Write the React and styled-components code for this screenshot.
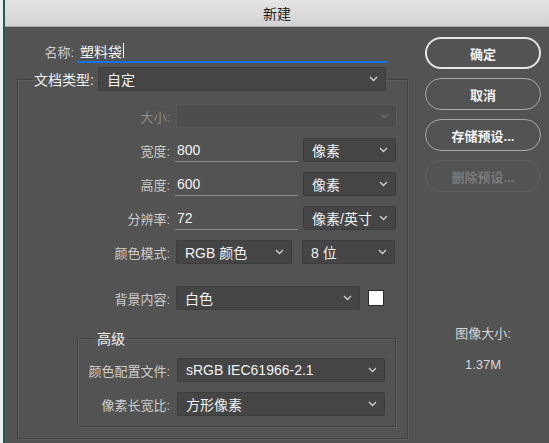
import React from 'react'
import styled, { createGlobalStyle } from 'styled-components'

const GlobalStyle = createGlobalStyle`
  html, body {
    margin: 0;
    padding: 0;
    background: #535353;
  }
  body {
    font-family: "Liberation Sans", "Noto Sans CJK SC", sans-serif;
    font-size: 13px;
  }
  * { box-sizing: border-box; }
`

const Screen = styled.div`
  width: 549px;
  height: 443px;
  display: flex;
  overflow: hidden;
`

const BehindWindow = styled.div`
  width: 5px;
  flex: none;
  background: #eeeeee;
  border-right: 2px solid #1f5c56;
`

const Dialog = styled.div`
  flex: 1;
  display: flex;
  flex-direction: column;
  background: #535353;
`

const TitleBar = styled.div`
  height: 27px;
  flex: none;
  display: flex;
  align-items: center;
  justify-content: center;
  background: linear-gradient(#e4e4e4, #d2d2d2);
  border-bottom: 1px solid #a9a9a9;
  color: #1c1c1c;
  font-size: 14px;
`

const Body = styled.div`
  flex: 1;
  display: grid;
  grid-template-columns: 415px 1fr;
`

const MainPane = styled.div`
  display: flex;
  flex-direction: column;
  padding-top: 13px;
`

const NameRow = styled.div`
  display: grid;
  grid-template-columns: 69px 311px;
  column-gap: 3px;
  align-items: center;
  height: 23px;
`

const Label = styled.span`
  text-align: right;
  white-space: nowrap;
  color: ${p => (p.$disabled ? '#8b8b8b' : '#cdcdcd')};
  font-size: 13px;
`

const NameInput = styled.div`
  height: 23px;
  display: flex;
  align-items: center;
  padding-left: 3px;
  border-bottom: 2px solid #1473e6;
  color: #f2f2f2;
  font-size: 14px;
`

const Caret = styled.span`
  width: 1px;
  height: 15px;
  margin-left: 1px;
  background: #f2f2f2;
`

const Group = styled.fieldset`
  margin: ${p => p.$margin};
  padding: ${p => p.$padding};
  width: ${p => p.$width}px;
  border: 1px solid #414141;
  box-shadow: 1px 1px 0 #5f5f5f, inset 1px 1px 0 #5f5f5f;
  display: flex;
  flex-direction: column;
  gap: ${p => p.$gap}px;
  min-width: 0;
`

const Legend = styled.legend`
  margin-left: ${p => p.$offset}px;
  padding: 0 2px;
  color: #f0f0f0;
  font-size: 14px;
`

const LegendRow = styled.div`
  display: flex;
  align-items: center;
  gap: 4px;
`

const Row = styled.div`
  display: grid;
  grid-template-columns: ${p => p.$label}px auto;
  column-gap: ${p => p.$gap}px;
  align-items: center;
  margin-top: ${p => p.$top || 0}px;
`

const Controls = styled.div`
  display: flex;
  align-items: center;
  gap: ${p => p.$gap || 5}px;
`

const SelectBox = styled.div`
  width: ${p => p.$w}px;
  height: 24px;
  display: flex;
  align-items: center;
  justify-content: space-between;
  padding: 0 7px 0 8px;
  background: ${p => (p.$disabled ? '#4d4d4d' : '#454545')};
  border: 1px solid ${p => (p.$disabled ? '#5a5a5a' : '#3d3d3d')};
  border-radius: 2px;
  color: #f2f2f2;
  font-size: 14px;
  white-space: nowrap;
`

const TextField = styled.div`
  width: ${p => p.$w}px;
  height: 24px;
  display: flex;
  align-items: center;
  padding-left: 2px;
  border-bottom: 1.5px solid #8a8a8a;
  color: #f2f2f2;
  font-size: 14px;
`

const Swatch = styled.div`
  width: 16px;
  height: 16px;
  margin-left: 3px;
  background: #ffffff;
  border: 1px solid #2a2a2a;
`

const SidePane = styled.div`
  display: flex;
  flex-direction: column;
  align-items: flex-start;
  padding: 10px 0 0 5px;
`

const Buttons = styled.div`
  display: flex;
  flex-direction: column;
  gap: 9px;
`

const PillButton = styled.button`
  width: 116px;
  height: 32px;
  border-radius: 16px;
  background: transparent;
  border: ${p => (p.$primary ? '2px solid #e6e6e6' : p.disabled ? '1.5px solid #626262' : '1.5px solid #a8a8a8')};
  color: ${p => (p.disabled ? '#7a7a7a' : '#f2f2f2')};
  font-family: inherit;
  font-size: 13px;
  font-weight: 700;
`

const SizeInfo = styled.div`
  width: 116px;
  margin-top: 131px;
  display: flex;
  flex-direction: column;
  align-items: center;
  gap: 15px;
  color: #d6d6d6;
  font-size: 13px;
`

const Chevron = ({ dim }) => (
  <svg width="9" height="6" viewBox="0 0 9 6">
    <polyline points="1,1 4.5,4.5 8,1" fill="none" stroke={dim ? '#6a6a6a' : '#cfcfcf'} strokeWidth="1.4" />
  </svg>
)

const Select = ({ w, value, disabled }) => (
  <SelectBox $w={w} $disabled={disabled}>
    <span>{value}</span>
    <Chevron dim={disabled} />
  </SelectBox>
)

const App = () => (
  <Screen>
    <GlobalStyle />
    <BehindWindow />
    <Dialog>
      <TitleBar>新建</TitleBar>
      <Body>
        <MainPane>
          <NameRow>
            <Label>名称:</Label>
            <NameInput>塑料袋<Caret /></NameInput>
          </NameRow>

          <Group $margin="4px 0 0 12px" $padding="13px 0 11px 0" $width={391} $gap={10}>
            <Legend $offset={14}>
              <LegendRow>
                <span>文档类型:</span>
                <Select w={288} value="自定" />
              </LegendRow>
            </Legend>

            <Row $label={152} $gap={6}>
              <Label $disabled>大小:</Label>
              <Select w={221} value="" disabled />
            </Row>
            <Row $label={152} $gap={5}>
              <Label>宽度:</Label>
              <Controls>
                <TextField $w={123}>800</TextField>
                <Select w={93} value="像素" />
              </Controls>
            </Row>
            <Row $label={152} $gap={5}>
              <Label>高度:</Label>
              <Controls>
                <TextField $w={123}>600</TextField>
                <Select w={93} value="像素" />
              </Controls>
            </Row>
            <Row $label={152} $gap={5}>
              <Label>分辨率:</Label>
              <Controls>
                <TextField $w={123}>72</TextField>
                <Select w={93} value="像素/英寸" />
              </Controls>
            </Row>
            <Row $label={152} $gap={6}>
              <Label>颜色模式:</Label>
              <Controls $gap={10}>
                <Select w={116} value="RGB 颜色" />
                <Select w={93} value="8 位" />
              </Controls>
            </Row>
            <Row $label={152} $gap={6} $top={12}>
              <Label>背景内容:</Label>
              <Controls $gap={5}>
                <Select w={184} value="白色" />
                <Swatch />
              </Controls>
            </Row>

            <Group $margin="8px 0 0 59px" $padding="10px 0 10px 0" $width={319} $gap={10}>
              <Legend $offset={17}>高级</Legend>
              <Row $label={92} $gap={7}>
                <Label>颜色配置文件:</Label>
                <Select w={208} value="sRGB IEC61966-2.1" />
              </Row>
              <Row $label={92} $gap={7}>
                <Label>像素长宽比:</Label>
                <Select w={208} value="方形像素" />
              </Row>
            </Group>
          </Group>
        </MainPane>

        <SidePane>
          <Buttons>
            <PillButton $primary>确定</PillButton>
            <PillButton>取消</PillButton>
            <PillButton>存储预设...</PillButton>
            <PillButton disabled>删除预设...</PillButton>
          </Buttons>
          <SizeInfo>
            <span>图像大小:</span>
            <span>1.37M</span>
          </SizeInfo>
        </SidePane>
      </Body>
    </Dialog>
  </Screen>
)

export default App
